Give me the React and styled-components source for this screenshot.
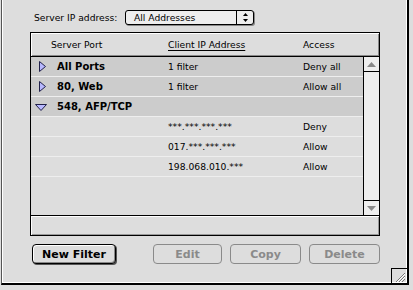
import styled, { createGlobalStyle } from 'styled-components';

const GlobalStyle = createGlobalStyle`
    html, body {
        margin: 0;
        padding: 0;
        background: #dddddd;
    }
    #root {
        width: 413px;
        height: 290px;
        overflow: hidden;
        font-family: 'DejaVu Sans', Verdana, sans-serif;
    }
`

const Window = styled.div`
    box-sizing: border-box;
    width: 408px;
    height: 285px;
    margin-left: 1px;
    background: #dddddd;
    border-left: 1px solid #555555;
    border-right: 2px solid #000000;
    border-bottom: 2px solid #000000;
    box-shadow: inset 1px 0 #ffffff, inset -1px -1px #ffffff;
    display: flex;
    flex-direction: column;
    padding: 10px 27px 0 28px;
`

const AddressRow = styled.div`
    display: flex;
    align-items: center;
    height: 15px;
    padding-left: 4px;
`

const Label = styled.span`
    width: 91px;
    font-size: 9.2px;
    color: #000000;
    white-space: nowrap;
`

const Popup = styled.div`
    box-sizing: border-box;
    width: 129px;
    height: 15px;
    border: 1px solid #000000;
    border-radius: 3px;
    box-shadow: 1px 1px 0 #888888;
    background: #eeeeee;
    display: flex;
    align-items: stretch;
`

const PopupText = styled.span`
    flex: 1;
    font-size: 9.2px;
    line-height: 13px;
    padding-left: 8px;
`

const PopupArrows = styled.div`
    width: 16px;
    border-left: 1px solid #000000;
    display: flex;
    align-items: center;
    justify-content: center;
`

const List = styled.div`
    box-sizing: border-box;
    width: 350px;
    height: 204px;
    margin-top: 7px;
    border: 1px solid #000000;
    background: #dddddd;
    display: flex;
    flex-direction: column;
`

const Header = styled.div`
    box-sizing: border-box;
    height: 24px;
    border-bottom: 1px solid #000000;
    box-shadow: inset 1px 1px #ffffff, inset -1px -1px #888888;
    display: grid;
    grid-template-columns: 137px 135px 1fr;
    align-items: center;
    font-size: 9.2px;
`

const HeadCell = styled.span`
    padding-left: ${p => p.$indent || 0}px;
    text-decoration: ${p => (p.$sorted ? 'underline' : 'none')};
    text-underline-offset: 2px;
`

const Body = styled.div`
    height: 158px;
    display: flex;
    border-bottom: 1px solid #000000;
`

const Rows = styled.div`
    flex: 1;
    display: flex;
    flex-direction: column;
`

const Row = styled.div`
    box-sizing: border-box;
    height: 20px;
    border-bottom: 1px solid #eeeeee;
    background: ${p => (p.$group ? '#cccccc' : '#dddddd')};
    display: grid;
    grid-template-columns: 137px 135px 1fr;
    align-items: center;
    font-size: 9.2px;
`

const NameCell = styled.div`
    display: flex;
    align-items: center;
    padding-left: 4px;
`

const Toggle = styled.span`
    width: 12px;
    height: 12px;
    display: flex;
`

const GroupName = styled.span`
    margin-left: 10px;
    font-size: 10px;
    font-weight: bold;
`

const Scrollbar = styled.div`
    width: 15px;
    border-left: 1px solid #000000;
    background: #eeeeee;
    display: flex;
    flex-direction: column;
    justify-content: space-between;
`

const ScrollArrow = styled.div`
    height: 14px;
    border-top: ${p => (p.$down ? '1px solid #000000' : 'none')};
    border-bottom: ${p => (p.$down ? 'none' : '1px solid #000000')};
    display: flex;
    align-items: center;
    justify-content: center;
`

const Footer = styled.div`
    flex: 1;
    box-shadow: inset 1px 1px #ffffff, inset -1px -1px #999999;
`

const ButtonRow = styled.div`
    display: flex;
    justify-content: space-between;
    margin-top: 8px;
    padding-left: 2px;
`

const ButtonGroup = styled.div`
    display: flex;
    gap: 8px;
`

const Button = styled.button`
    box-sizing: border-box;
    width: ${p => p.$width}px;
    height: 20px;
    padding: 0;
    border: 1px solid ${p => (p.disabled ? '#8a8a8a' : '#000000')};
    border-radius: 4px;
    background: #dddddd;
    color: ${p => (p.disabled ? '#8a8a8a' : '#000000')};
    font-family: 'DejaVu Sans', Verdana, sans-serif;
    font-size: 11px;
    font-weight: bold;
    box-shadow: ${p => (p.disabled ? 'none' : 'inset 1px 1px #ffffff, inset -1px -1px #888888, 1px 1px 0 #555555')};
`

const GrowBox = styled.div`
    margin-top: auto;
    align-self: flex-end;
    margin-right: -27px;
    width: 16px;
    height: 15px;
    box-sizing: border-box;
    border-top: 1px solid #000000;
    border-left: 1px solid #000000;
    display: flex;
    align-items: flex-end;
    justify-content: flex-end;
`

const ClosedArrow = () => (
    <svg width="12" height="12" viewBox="0 0 12 12">
        <polygon points="4.5,0.5 10.5,5.5 4.5,10.5" fill="#b8b8ff" stroke="#20204a" strokeWidth="1" />
    </svg>
)

const OpenArrow = () => (
    <svg width="12" height="12" viewBox="0 0 12 12">
        <polygon points="0.5,3.5 11.5,3.5 6,9.5" fill="#b8b8ff" stroke="#20204a" strokeWidth="1" />
    </svg>
)

const groups = [
    { port: 'All Ports', client: '1 filter', access: 'Deny all', open: false },
    { port: '80, Web', client: '1 filter', access: 'Allow all', open: false },
    { port: '548, AFP/TCP', client: '', access: '', open: true },
]

const filters = [
    { client: '***.***.***.***', access: 'Deny' },
    { client: '017.***.***.***', access: 'Allow' },
    { client: '198.068.010.***', access: 'Allow' },
]

const App = () => {
    return (
        <>
            <GlobalStyle />
            <Window>
                <AddressRow>
                    <Label>Server IP address:</Label>
                    <Popup>
                        <PopupText>All Addresses</PopupText>
                        <PopupArrows>
                            <svg width="5" height="9" viewBox="0 0 5 9">
                                <polygon points="2.5,0 5,3 0,3" fill="#000" />
                                <polygon points="0,6 5,6 2.5,9" fill="#000" />
                            </svg>
                        </PopupArrows>
                    </Popup>
                </AddressRow>

                <List>
                    <Header>
                        <HeadCell $indent={20}>Server Port</HeadCell>
                        <HeadCell $sorted>Client IP Address</HeadCell>
                        <HeadCell>Access</HeadCell>
                    </Header>
                    <Body>
                        <Rows>
                            {groups.map((g) => (
                                <Row $group key={g.port}>
                                    <NameCell>
                                        <Toggle>{g.open ? <OpenArrow /> : <ClosedArrow />}</Toggle>
                                        <GroupName>{g.port}</GroupName>
                                    </NameCell>
                                    <span>{g.client}</span>
                                    <span>{g.access}</span>
                                </Row>
                            ))}
                            {filters.map((f) => (
                                <Row key={f.client}>
                                    <NameCell />
                                    <span>{f.client}</span>
                                    <span>{f.access}</span>
                                </Row>
                            ))}
                        </Rows>
                        <Scrollbar>
                            <ScrollArrow>
                                <svg width="9" height="5" viewBox="0 0 9 5">
                                    <polygon points="4.5,0 9,5 0,5" fill="#888888" />
                                </svg>
                            </ScrollArrow>
                            <ScrollArrow $down>
                                <svg width="9" height="5" viewBox="0 0 9 5">
                                    <polygon points="0,0 9,0 4.5,5" fill="#888888" />
                                </svg>
                            </ScrollArrow>
                        </Scrollbar>
                    </Body>
                    <Footer />
                </List>

                <ButtonRow>
                    <Button $width={84}>New Filter</Button>
                    <ButtonGroup>
                        <Button $width={69} disabled>Edit</Button>
                        <Button $width={71} disabled>Copy</Button>
                        <Button $width={71} disabled>Delete</Button>
                    </ButtonGroup>
                </ButtonRow>

                <GrowBox>
                    <svg width="14" height="13" viewBox="0 0 14 13">
                        <line x1="3" y1="12" x2="12" y2="3" stroke="#777777" />
                        <line x1="6" y1="12" x2="12" y2="6" stroke="#777777" />
                        <line x1="9" y1="12" x2="12" y2="9" stroke="#777777" />
                        <line x1="4" y1="12" x2="12" y2="4" stroke="#ffffff" />
                        <line x1="7" y1="12" x2="12" y2="7" stroke="#ffffff" />
                    </svg>
                </GrowBox>
            </Window>
        </>
    );
}

export default App;
